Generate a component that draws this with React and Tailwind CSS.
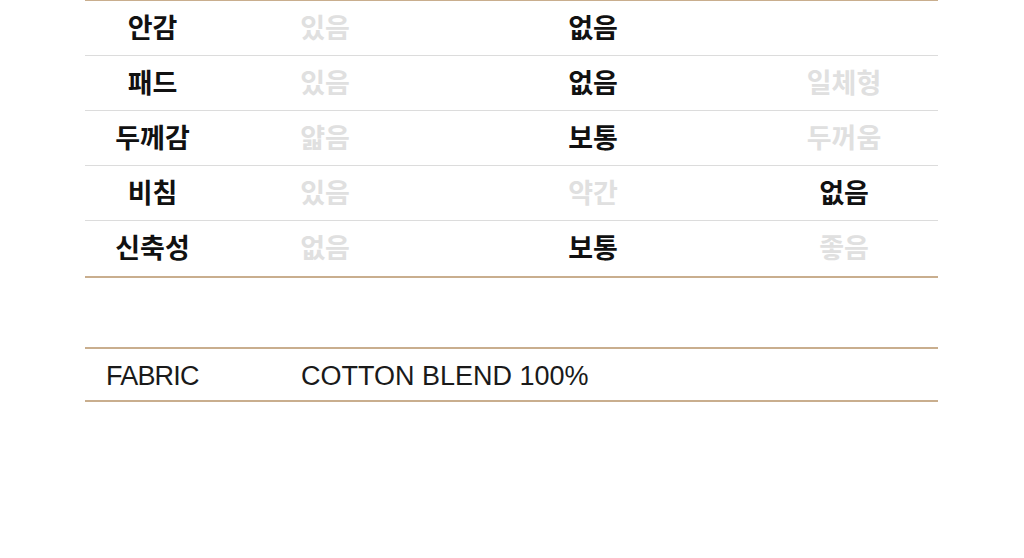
const rows = [
  { label: "안감", cells: [["있음", false], ["없음", true], ["", false]] },
  { label: "패드", cells: [["있음", false], ["없음", true], ["일체형", false]] },
  { label: "두께감", cells: [["얇음", false], ["보통", true], ["두꺼움", false]] },
  { label: "비침", cells: [["있음", false], ["약간", false], ["없음", true]] },
  { label: "신축성", cells: [["없음", false], ["보통", true], ["좋음", false]] },
];

const widths = ["w-[210px]", "w-[326px]", "w-[176px]"];

const App = () => {
  return (
    <div
      className="w-[1024px] h-[558px] bg-white overflow-hidden"
      style={{ fontFamily: '"Noto Sans CJK KR", "Noto Sans", sans-serif' }}
    >
      <div className="ml-[85px] w-[853px]">
        {/* option table */}
        <div className="-mt-px border-t-2 border-b-2 border-[#c9ae8e]">
          {rows.map((row, i) => (
            <div
              key={row.label}
              className={
                i < rows.length - 1
                  ? "flex items-center h-[55px] pb-[4px] border-b border-[#dcdcdc]"
                  : "flex items-center h-[55px] pb-[4px]"
              }
            >
              <div className="w-[135px] text-center text-[27px] font-bold text-[#111] leading-none">
                {row.label}
              </div>
              {row.cells.map(([text, on], j) => (
                <div
                  key={j}
                  className={`${widths[j]} text-center text-[27px] font-bold leading-none ${
                    on ? "text-[#111]" : "text-[#e0e0e0]"
                  }`}
                >
                  {text}
                </div>
              ))}
            </div>
          ))}
        </div>

        {/* fabric */}
        <div
          className="mt-[69px] flex items-center h-[55px] pt-[3px] border-t-2 border-b-2 border-[#c9ae8e] text-[27px] text-[#1a1a1a]"
          style={{ fontFamily: '"Liberation Sans", Arial, sans-serif' }}
        >
          <div className="w-[216px] pl-[21px] tracking-[-0.8px]">FABRIC</div>
          <div>COTTON BLEND 100%</div>
        </div>
      </div>
    </div>
  );
};

export default App;
